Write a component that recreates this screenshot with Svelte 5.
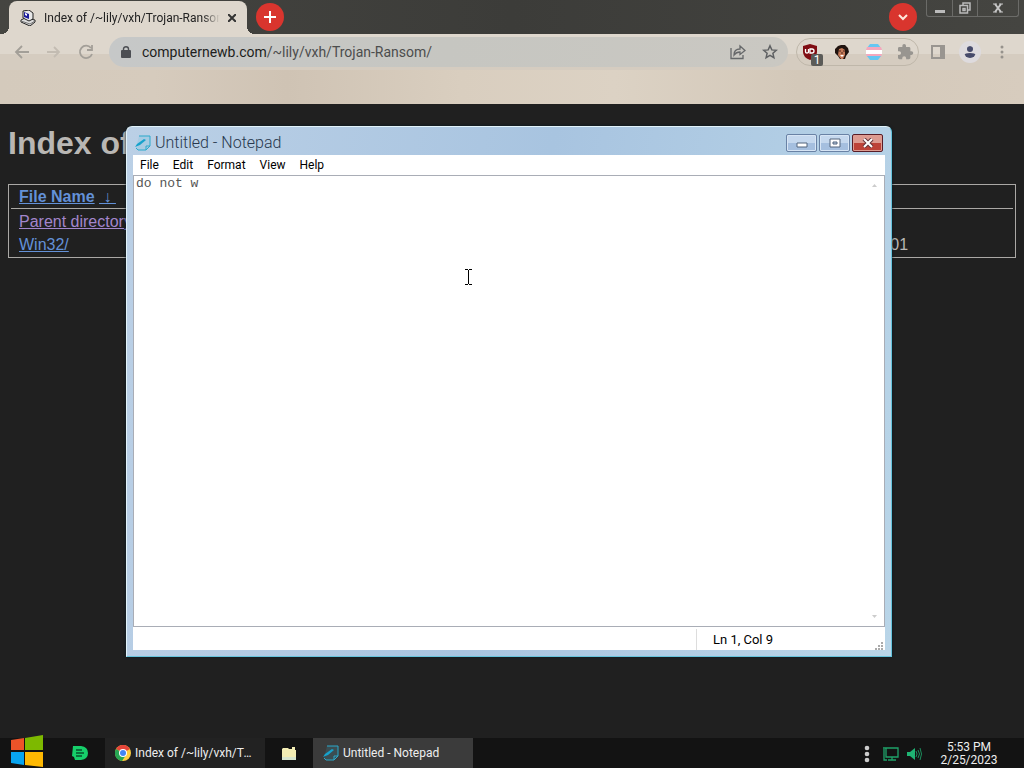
<script lang="ts">
	type Entry = { name: string; size: string; date: string; visited?: boolean };

	const entries: Entry[] = [
		{ name: 'Parent directory/', size: '-', date: '-', visited: true },
		{ name: 'Win32/', size: '-', date: '2023-Feb-18 22:01' },
	];

	const menus = ['File', 'Edit', 'Format', 'View', 'Help'];

	let text = $state('do not w');
	let address = $state('computernewb.com/~lily/vxh/Trojan-Ransom/');
	let [host, path] = $derived([address.split('/')[0], address.slice(address.indexOf('/'))]);
	let column = $derived(text.length - text.lastIndexOf('\n'));
	let line = $derived(text.split('\n').length);
</script>

{#snippet noteIcon()}
	<svg viewBox="0 0 16 16" width="16" height="16" aria-hidden="true">
		<path d="M4 1h11v10l-4 4H3l-2-2" fill="#33b5d5" fill-opacity=".15" stroke="#2aa9cb" />
		<path d="M15 11h-4v4" fill="none" stroke="#2aa9cb" />
		<path d="M0 12l2-3 7-5 2 1-6 5z" fill="#16a2cc" />
	</svg>
{/snippet}

<div class="desktop">
	<main class="browser">
		<header class="tab-strip">
			<div class="tab">
				<svg viewBox="0 0 16 16" width="16" height="16" aria-hidden="true">
					<path d="M1 10l4-2 10 2v2l-5 4-9-4z" fill="#ddd" stroke="#222" />
					<path d="M1 11l9 3 5-3" fill="none" stroke="#777" />
					<path d="M3 1l6-1 4 3v6l-4 2-6-3z" fill="#e8e8e8" stroke="#222" />
					<path d="M4 2l5 2v5L4 7z" fill="#1c1c9c" />
					<path d="M5 3l2 1v2L5 5z" fill="#fff" />
				</svg>
				<span class="tab-title">Index of /~lily/vxh/Trojan-Ransom/</span>
				<button class="tab-close" aria-label="Close tab">
					<svg viewBox="0 0 8 8" width="8" height="8"><path d="M0 0l8 8M8 0L0 8" stroke="#333" stroke-width="2" /></svg>
				</button>
			</div>
			<button class="round" aria-label="New tab">
				<svg viewBox="0 0 12 12" width="12" height="12"><path d="M6 0v12M0 6h12" stroke="#fff" stroke-width="2" /></svg>
			</button>
			<div class="spacer"></div>
			<button class="round" aria-label="Search tabs">
				<svg viewBox="0 0 12 12" width="12" height="12"><path d="M2 4l4 4 4-4" fill="none" stroke="#ffe8dc" stroke-width="2" /></svg>
			</button>
			<div class="frame-buttons">
				<button aria-label="Minimize browser">
					<svg viewBox="0 0 12 12" width="12" height="12"><path d="M1 8h10v3H1z" fill="#bbb" /></svg>
				</button>
				<button aria-label="Restore browser">
					<svg viewBox="0 0 12 12" width="12" height="12" fill="none" stroke="#bbb" stroke-width="1.5"><path d="M4 3V1h7v7H9M1 3.500h7.500v7.500H1zM4 6.500h2v2H4z" /></svg>
				</button>
				<button class="wide" aria-label="Close browser">
					<svg viewBox="0 0 12 12" width="12" height="12"><path d="M3 2l6 8M9 2l-6 8" stroke="#c6c6c6" stroke-width="2" /><path d="M1 2h4M7 2h4M1 10h4M7 10h4" stroke="#c6c6c6" /></svg>
				</button>
			</div>
		</header>

		<nav class="toolbar" aria-label="Navigation">
			<button class="tool" aria-label="Back">
				<svg viewBox="0 0 16 16" width="16" height="16" fill="none" stroke="#a39f98" stroke-width="1.800"><path d="M15 8H2M8 2L2 8l6 6" /></svg>
			</button>
			<button class="tool" aria-label="Forward">
				<svg viewBox="0 0 16 16" width="16" height="16" fill="none" stroke="#c3bcb2" stroke-width="1.800"><path d="M1 8h12M8 3l5 5-5 5" /></svg>
			</button>
			<button class="tool" aria-label="Reload">
				<svg viewBox="0 0 16 16" width="16" height="16" fill="none" stroke="#a39f98" stroke-width="1.800"><path d="M13 4a6.200 6.200 0 1 0 1 6M14 1v5H9" /></svg>
			</button>
			<div class="omnibox">
				<svg viewBox="0 0 10 12" width="10" height="12" aria-hidden="true"><path d="M1 4h8q1 0 1 1v6q0 1-1 1H1q-1 0-1-1V5q0-1 1-1z" fill="#4c4e53" /><path d="M2.500 5V3a2.500 2.300 0 0 1 5 0v2" fill="none" stroke="#4c4e53" stroke-width="1.400" /></svg>
				<a class="address" href="#top" aria-label="Address"><span class="host">{host}</span>{path}</a>
				<button class="tool" aria-label="Share">
					<svg viewBox="0 0 16 16" width="16" height="16" fill="none" stroke="#66686a" stroke-width="1.300"><path d="M1 4v10.500h12V11M4 11c0-4 2-6 6-6V2l5 4.500-5 4V8C7 8 5.500 9 4 11z" /></svg>
				</button>
				<button class="tool" aria-label="Bookmark">
					<svg viewBox="0 0 16 16" width="16" height="16" fill="none" stroke="#5f6163" stroke-width="1.500"><path d="M8 1.800l1.800 4.100 4.500.4-3.400 3 1 4.400L8 11.400l-3.900 2.300 1-4.400-3.400-3 4.500-.4z" /></svg>
				</button>
			</div>
			<div class="extensions">
				<button class="tool" aria-label="Content blocker">
					<svg viewBox="0 0 16 16" width="16" height="16"><path d="M8 0l7 2v6q0 5-7 8-7-3-7-8V2z" fill="#800d13" /><path d="M3.500 5v3q0 1 1.500 1t1.500-1V5M8 9V5h2q2 0 2 2t-2 2z" fill="none" stroke="#fff" stroke-width="1.300" /></svg>
					<span class="badge">1</span>
				</button>
				<button class="tool" aria-label="Portrait extension">
					<svg viewBox="0 0 16 16" width="16" height="16"><path d="M4 2l3-1h4l3 3 1 4-3 4-1 3H6l-2-3-3-3V5z" fill="#20130f" /><path d="M5 5l3-1 3 2v5l-2 4H7l-3-4z" fill="#c47a59" /><path d="M5 7h2M9 7h2M8 8v2" stroke="#4a241a" /><path d="M6 11h4l-2 2z" fill="#fff" /></svg>
				</button>
				<button class="tool" aria-label="Flag extension">
					<svg viewBox="0 0 16 16" width="16" height="16"><path d="M4 0h8l3 4H1z" fill="#65c7f2" /><path d="M1 3h14l1 3H0z" fill="#f4a8bd" /><path d="M0 6h16v4H0z" fill="#fff" /><path d="M0 10h16l-1 3H1z" fill="#f4a8bd" /><path d="M1 12h14l-3 4H4z" fill="#65c7f2" /></svg>
				</button>
				<button class="tool" aria-label="Extensions">
					<svg viewBox="2 1 22 22" width="16" height="16"><path d="M20.500 11H19V7a2 2 0 0 0-2-2h-4V3.500a2.500 2.500 0 0 0-5 0V5H4a2 2 0 0 0-2 2v3.800h1.500a2.700 2.700 0 0 1 0 5.400H2V20a2 2 0 0 0 2 2h3.800v-1.500a2.700 2.700 0 0 1 5.400 0V22H17a2 2 0 0 0 2-2v-4h1.500a2.500 2.500 0 0 0 0-5z" fill="#989590" /></svg>
				</button>
			</div>
			<button class="tool" aria-label="Side panel">
				<svg viewBox="0 0 14 14" width="14" height="14"><path d="M1 1h12v12H1z" fill="none" stroke="#999590" stroke-width="2" /><path d="M9 1h4v12H9z" fill="#999590" /></svg>
			</button>
			<button class="tool profile" aria-label="Profile">
				<svg viewBox="0 0 12 12" width="12" height="12" fill="#474b6b"><circle cx="6" cy="3" r="3" /><path d="M0 12V9q1-2 6-2t6 2v3z" /></svg>
			</button>
			<button class="tool" aria-label="Browser menu">
				<svg viewBox="0 0 4 14" width="4" height="14" fill="#96928c"><circle cx="2" cy="2" r="1.500" /><circle cx="2" cy="7" r="1.500" /><circle cx="2" cy="12" r="1.500" /></svg>
			</button>
		</nav>
		<div class="bookmarks"></div>

		<section class="page" id="top">
			<h1>Index of /~lily/vxh/Trojan-Ransom/</h1>
			<table>
				<thead>
					<tr>
						<th><a href="#name">File Name</a>&nbsp;<a class="sort" href="#asc">&nbsp;↓&nbsp;</a></th>
						<th><a href="#size">File Size</a></th>
						<th><a href="#date">Date</a></th>
					</tr>
				</thead>
				<tbody>
					{#each entries as entry}
						<tr>
							<td><a class:visited={entry.visited} href="#{entry.name}">{entry.name}</a></td>
							<td>{entry.size}</td>
							<td>{entry.date}</td>
						</tr>
					{/each}
				</tbody>
			</table>
		</section>
	</main>

	<!-- Notepad floats over the browser -->
	<section class="notepad" aria-label="Untitled - Notepad">
		<header class="title-bar">
			{@render noteIcon()}
			<span class="title">Untitled - Notepad</span>
			<button class="caption" aria-label="Minimize">
				<svg viewBox="0 0 12 10" width="12" height="10"><path d="M1 5h10v4H1z" fill="#fff" stroke="#52647d" /></svg>
			</button>
			<button class="caption" aria-label="Maximize">
				<svg viewBox="0 0 12 10" width="12" height="10"><path d="M1 1h10v8H1z" fill="#fff" stroke="#52647d" /><path d="M4 4h4v2H4z" fill="#b9cce4" stroke="#52647d" /></svg>
			</button>
			<button class="caption close" aria-label="Close">
				<svg viewBox="0 0 12 10" width="12" height="10"><path d="M2 1l8 8M10 1L2 9" stroke="#64343a" stroke-width="4" /><path d="M2 1l8 8M10 1L2 9" stroke="#fff" stroke-width="2" /></svg>
			</button>
		</header>
		<div class="client">
			<div class="menu-bar">
				{#each menus as menu}
					<button>{menu}</button>
				{/each}
			</div>
			<div class="editor">
				<textarea bind:value={text} aria-label="Document" spellcheck="false"></textarea>
				<div class="scrollbar">
					<svg viewBox="0 0 5 3" width="5" height="3"><path d="M0 3L2.500 0 5 3z" fill="#ccc" /></svg>
					<svg viewBox="0 0 5 3" width="5" height="3"><path d="M0 0h5L2.500 3z" fill="#ccc" /></svg>
				</div>
			</div>
			<footer class="status-bar">
				<span class="position">Ln {line}, Col {column}</span>
				<svg viewBox="0 0 8 8" width="8" height="8" fill="#aaa" aria-hidden="true"><path d="M6 0h2v2H6zM3 3h2v2H3zM6 3h2v2H6zM0 6h2v2H0zM3 6h2v2H3zM6 6h2v2H6z" /></svg>
			</footer>
		</div>
	</section>

	<svg class="cursor" viewBox="0 0 7 16" width="7" height="16" aria-hidden="true"><path d="M0 0h3v1h1V0h3v1H4v14h3v1H4v-1H3v1H0v-1h3V1H0z" fill="#000" /></svg>

	<footer class="taskbar">
		<button class="start" aria-label="Start">
			<svg viewBox="0 0 34 32" width="34" height="32"><path d="M1 5l13-2v12H1z" fill="#ed5329" /><path d="M15 3l18-3v15H15z" fill="#7db900" /><path d="M1 17h13v13L1 28z" fill="#08a4ef" /><path d="M15 17h18v15l-18-2z" fill="#ffb902" /></svg>
		</button>
		<button class="pin" aria-label="Pinned app">
			<svg viewBox="0 0 16 14" width="16" height="14"><path d="M1 0h8q7 1 7 7t-7 7H3l-1-3-2-1z" fill="#16cf6a" /><path d="M4 4h6M4 7h8M4 10h6" stroke="#07512c" stroke-width="1.500" /></svg>
		</button>
		<button class="task">
			<svg viewBox="0 0 16 16" width="16" height="16" aria-hidden="true"><circle cx="8" cy="8" r="8" fill="#ffcd3f" /><path d="M8 8L1 4a8 8 0 0 1 14 0z" fill="#e5453a" /><path d="M8 8L1 4a8 8 0 0 0 6 12l4-6z" fill="#27a552" /><circle cx="8" cy="8" r="4" fill="#fff" /><circle cx="8" cy="8" r="3" fill="#4285f4" /></svg>
			<span>Index of /~lily/vxh/Trojan-Ransom/</span>
		</button>
		<button class="pin folder" aria-label="Files">
			<svg viewBox="0 0 14 13" width="14" height="13"><path d="M1 1h5l1 1h3V0h3v3h1v10H0V2z" fill="#f3edb4" /><path d="M0 10h14v3H0z" fill="#d8e6cf" /></svg>
		</button>
		<button class="task active">
			{@render noteIcon()}
			<span>Untitled - Notepad</span>
		</button>
		<div class="spacer"></div>
		<div class="tray">
			<button aria-label="Hidden icons">
				<svg viewBox="0 0 6 18" width="6" height="18" fill="#ccc"><circle cx="3" cy="3" r="2.300" /><circle cx="3" cy="9" r="2.300" /><circle cx="3" cy="15" r="2.300" /></svg>
			</button>
			<button aria-label="Network">
				<svg viewBox="0 0 16 16" width="16" height="16" fill="none" stroke="#1fa36a" stroke-width="1.300"><path d="M0 2h3M3 2h12v9H3zM9 11v3M5 14h8M1 3v11h3" /></svg>
			</button>
			<button aria-label="Volume">
				<svg viewBox="0 0 16 16" width="16" height="16"><path d="M1 6h3l5-4v12l-5-4H1z" fill="#1fb473" /><path d="M10 5q2 3 0 6M12 4q3 4 0 8M14 2q3 6 0 12" fill="none" stroke="#1c8e5d" /></svg>
			</button>
		</div>
		<button class="clock"><span>5:53 PM</span><span>2/25/2023</span></button>
	</footer>
</div>

<style>
	:global(body) {
		margin: 0;
		background: #202020;
	}

	.desktop {
		position: relative;
		display: flex;
		flex-direction: column;
		height: 100vh;
		overflow: hidden;
		font: 400 12px/16px Roboto, sans-serif;
		color: #222;
	}

	button {
		display: flex;
		align-items: center;
		justify-content: center;
		padding: 0;
		border: 0;
		background: none;
		color: inherit;
		font: inherit;
	}

	svg {
		flex-shrink: 0;
	}

	.spacer {
		flex: 1;
	}

	.browser {
		flex: 1;
		min-height: 0;
		display: flex;
		flex-direction: column;
	}

	/* Tab strip */
	.tab-strip {
		display: flex;
		align-items: flex-start;
		height: 34px;
		background: linear-gradient(90deg, #454541, #3c3c39 50%, #454541);
	}

	.tab {
		position: relative;
		display: flex;
		align-items: center;
		gap: 8px;
		box-sizing: border-box;
		width: 238px;
		height: 33px;
		margin: 1px 9px 0;
		padding: 0 11px;
		border-radius: 8px 8px 0 0;
		background: #ded7cd;
	}

	/* Flared feet of the active tab */
	.tab::before,
	.tab::after {
		content: '';
		position: absolute;
		bottom: 0;
		width: 8px;
		height: 8px;
	}

	.tab::before {
		right: 100%;
		background: radial-gradient(circle at 0 0, transparent 8px, #ded7cd 8px);
	}

	.tab::after {
		left: 100%;
		background: radial-gradient(circle at 100% 0, transparent 8px, #ded7cd 8px);
	}

	.tab-title {
		flex: 1;
		overflow: hidden;
		white-space: nowrap;
		mask-image: linear-gradient(90deg, #000 90%, transparent);
	}

	.round {
		width: 28px;
		height: 28px;
		margin-top: 3px;
		border-radius: 50%;
		background: #d9352e;
	}

	.frame-buttons {
		display: flex;
		margin: 0 5px 0 9px;
		border: 1px solid #6b6b68;
		border-top: 0;
		border-radius: 0 0 3px 3px;
	}

	.frame-buttons button {
		box-sizing: border-box;
		width: 25px;
		height: 16px;
	}

	.frame-buttons button + button {
		border-left: 1px solid #6b6b68;
	}

	.frame-buttons .wide {
		width: 41px;
	}

	/* Toolbar */
	.toolbar {
		display: flex;
		align-items: center;
		height: 36px;
		padding: 0 6px;
		background: linear-gradient(#ded7cd 55%, #d5ccc0 55%);
	}

	.tool {
		position: relative;
		width: 32px;
		height: 28px;
	}

	.omnibox {
		flex: 1;
		min-width: 0;
		display: flex;
		align-items: center;
		height: 30px;
		margin: 0 8px 0 7px;
		padding: 0 2px 0 12px;
		border-radius: 15px;
		background: linear-gradient(90deg, #c6c8c8, #c6c6c1 50%, #cac8c2);
	}

	.address {
		flex: 1;
		margin-left: 11px;
		font-size: 14px;
		color: #4c4d4d;
		text-decoration: none;
	}

	.host {
		color: #1d1e20;
	}

	.extensions {
		display: flex;
		align-items: center;
		gap: 8px;
		box-sizing: border-box;
		height: 28px;
		margin-right: 3px;
		padding-left: 1px;
		border: 1px solid #bfb7aa;
		border-radius: 14px;
	}

	.extensions .tool {
		width: 24px;
	}

	.badge {
		position: absolute;
		right: -1px;
		bottom: 0;
		width: 12px;
		height: 12px;
		border-radius: 2px;
		background: #5b5b58;
		color: #fff;
		line-height: 12px;
	}

	.profile svg {
		padding: 5px;
		border-radius: 50%;
		background: #dedbde;
	}

	.bookmarks {
		height: 34px;
		background: linear-gradient(90deg, #d4cabc, #d6cbbd 15%, #cfc3b4 28%, #d9cebf 45%, #dcd2c4 60%, #d3c8b9 78%, #d7ccbe);
	}

	/* Directory listing */
	.page {
		flex: 1;
		padding: 0 8px;
		background: #202020;
		color: #b9b7b4;
		font: 16px/18px "Liberation Sans", sans-serif;
	}

	h1 {
		margin: 21px 0 22px;
		font-size: 32px;
		line-height: 37px;
	}

	table {
		width: 100%;
		border: 1px solid #aaa8a5;
		border-spacing: 0;
		padding: 1px 2px 0;
	}

	th,
	td {
		padding: 2px 8px 3px;
		text-align: left;
	}

	th {
		padding: 2px 8px;
		border-bottom: 1px solid #aaa8a5;
	}

	tbody tr:first-child td {
		padding-top: 4px;
	}

	th:last-child,
	td:last-child {
		width: 233px;
	}

	.page a {
		color: #6391d8;
	}

	.page a.visited {
		color: #a386cc;
	}

	.page a.sort {
		font-weight: 400;
	}

	/* Notepad */
	.notepad {
		position: absolute;
		inset: 126px 132px 111px 126px;
		display: flex;
		flex-direction: column;
		box-sizing: border-box;
		padding: 0 6px 6px;
		border: 1px solid #e2f3fa;
		border-right-color: #65c3dc;
		border-bottom-color: #65c3dc;
		border-radius: 6px 6px 0 0;
		background: linear-gradient(100deg, #bbd0e6, #a8c4e0 50%, #b9d5e8);
		box-shadow: 0 0 3px #071c26;
	}

	.title-bar {
		display: flex;
		align-items: center;
		gap: 2px;
		box-sizing: border-box;
		height: 28px;
		padding: 4px 2px 0;
	}

	.title {
		flex: 1;
		margin-left: 2px;
		font-size: 16px;
		font-weight: 300;
		line-height: 18px;
		color: #28384d;
	}

	.caption {
		box-sizing: border-box;
		width: 31px;
		height: 18px;
		border: 1px solid #6982a5;
		border-radius: 2px;
		background: linear-gradient(#c5d8ee 50%, #a5bfdf 50%);
		box-shadow: inset 0 0 0 1px #d7e5f5;
	}

	.caption.close {
		border-color: #591d27;
		background: linear-gradient(#dd9b91 50%, #bd4238 50%);
		box-shadow: inset 0 0 0 1px #df9d92;
	}

	.client {
		flex: 1;
		min-height: 0;
		display: flex;
		flex-direction: column;
		background: #fff;
		color: #000;
	}

	.menu-bar {
		display: flex;
		gap: 14px;
		height: 20px;
		padding: 0 7px;
	}

	.editor {
		flex: 1;
		display: flex;
		border: 1px solid #a9adb6;
	}

	textarea {
		flex: 1;
		min-width: 0;
		padding: 0 2px;
		border: 0;
		outline: 0;
		resize: none;
		background: none;
		color: #555;
		font: 13px/16px "Liberation Mono", monospace;
	}

	.scrollbar {
		display: flex;
		flex-direction: column;
		justify-content: space-between;
		padding: 8px 7px;
	}

	.status-bar {
		display: flex;
		align-items: flex-end;
		justify-content: flex-end;
		height: 21px;
		padding: 2px 2px 0;
	}

	.position {
		box-sizing: border-box;
		width: 179px;
		height: 21px;
		padding-left: 16px;
		border-left: 1px solid #ddd;
		font-size: 13px;
		line-height: 21px;
	}

	.cursor {
		position: absolute;
		left: 465px;
		top: 269px;
	}

	/* Taskbar */
	.taskbar {
		display: flex;
		height: 30px;
		background: #131313;
		color: #eee;
	}

	.start {
		width: 54px;
		height: 26px;
	}

	.pin {
		width: 51px;
	}

	.pin.folder {
		width: 48px;
	}

	.task {
		justify-content: flex-start;
		gap: 4px;
		box-sizing: border-box;
		width: 160px;
		padding: 0 10px;
		background: #222;
	}

	.task.active {
		background: #3b3b3b;
	}

	.task span {
		flex: 0 1 120px;
		overflow: hidden;
		text-align: left;
		text-overflow: ellipsis;
		white-space: nowrap;
	}

	.tray {
		display: flex;
		align-items: center;
		gap: 7px;
		padding-top: 2px;
	}

	.tray button:first-child {
		margin-right: 6px;
	}

	.clock {
		flex-direction: column;
		width: 94px;
		margin-right: 8px;
		padding-top: 2px;
		line-height: 13px;
	}
</style>
